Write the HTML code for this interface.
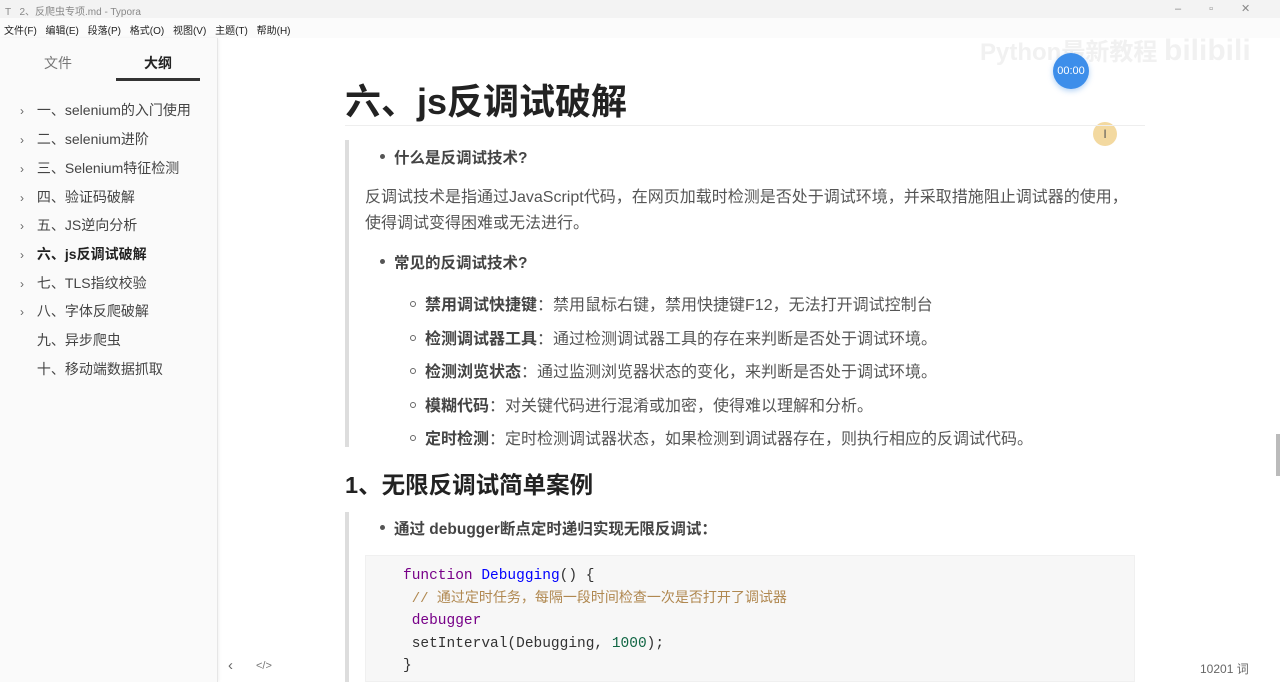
<!DOCTYPE html>
<html><head><meta charset="utf-8"><style>
*{margin:0;padding:0;box-sizing:border-box}
body{width:1280px;height:682px;overflow:hidden;background:#fff;font-family:"Liberation Sans","Noto Sans CJK SC",sans-serif;color:#333;position:relative}
.a{position:absolute;white-space:nowrap}
#tb{left:0;top:0;width:1280px;height:18px;background:#f3f3f3}
#mb{left:0;top:18px;width:1280px;height:20px;background:#fbfbfb}
#sb{left:0;top:38px;width:218px;height:644px;background:#fafafa;border-right:1px solid #e6e6e6;box-shadow:1px 0 3px rgba(0,0,0,.06)}
.ol{font-size:14px;color:#444;left:20px}
.ol b{display:inline-block;width:13px;color:#666;font-weight:normal;font-size:12px}
.t{font-size:16px;color:#555}
.bq{left:345px;width:4px;background:#ddd}
.li{font-size:15.5px;color:#444}
.dot{display:inline-block;width:5px;height:5px;border-radius:50%;background:#555;margin-right:9px;vertical-align:middle;position:relative;top:-2px}
.cir{display:inline-block;width:6px;height:6px;border-radius:50%;border:1px solid #666;margin-right:9px;vertical-align:middle;position:relative;top:-2px}
.code{font-family:"Liberation Mono","Noto Sans CJK SC",monospace;font-size:14.5px;color:#333}
</style></head><body>
<div class="a" id="tb"></div>
<div class="a" style="left:5px;top:3px;font-size:10px;color:#888">T&nbsp;&nbsp; 2、反爬虫专项.md - Typora</div>
<div class="a" style="left:1175px;top:2px;font-size:11px;color:#888;letter-spacing:28px">–▫✕</div>
<div class="a" id="mb"></div>
<div class="a" style="left:4px;top:22px;font-size:10px;color:#222;word-spacing:6px">文件(F) 编辑(E) 段落(P) 格式(O) 视图(V) 主题(T) 帮助(H)</div>
<div class="a" id="sb"></div>
<div class="a" style="left:44px;top:53px;font-size:14px;color:#777">文件</div>
<div class="a" style="left:144px;top:53px;font-size:14px;color:#222;font-weight:bold">大纲</div>
<div class="a" style="left:116px;top:78px;width:84px;height:3px;background:#333"></div>
<div class="a ol" style="top:100px"><b>›</b> 一、selenium的入门使用</div>
<div class="a ol" style="top:129px"><b>›</b> 二、selenium进阶</div>
<div class="a ol" style="top:158px"><b>›</b> 三、Selenium特征检测</div>
<div class="a ol" style="top:187px"><b>›</b> 四、验证码破解</div>
<div class="a ol" style="top:215px"><b>›</b> 五、JS逆向分析</div>
<div class="a ol" style="top:244px;font-weight:bold;color:#222"><b>›</b> 六、js反调试破解</div>
<div class="a ol" style="top:273px"><b>›</b> 七、TLS指纹校验</div>
<div class="a ol" style="top:301px"><b>›</b> 八、字体反爬破解</div>
<div class="a ol" style="top:330px"><b></b> 九、异步爬虫</div>
<div class="a ol" style="top:359px"><b></b> 十、移动端数据抓取</div>
<div class="a" style="left:228px;top:657px;font-size:15px;color:#666">‹</div>
<div class="a" style="left:256px;top:660px;font-size:11px;color:#777">&lt;/&gt;</div>

<div class="a" style="left:980px;top:32px;font-size:24px;font-weight:bold;color:#f1f1f1">Python最新教程 <span style="font-size:30px">bilibili</span></div>
<div class="a" style="left:1053px;top:53px;width:36px;height:36px;border-radius:50%;background:#3d8eea;box-shadow:0 2px 6px rgba(60,140,230,.4);color:#fff;font-size:11px;text-align:center;line-height:36px">00:00</div>
<div class="a" style="left:1093px;top:122px;width:24px;height:24px;border-radius:50%;background:#f3d9a0;color:#555;font-size:12px;text-align:center;line-height:24px">I</div>

<div class="a" style="left:345px;top:73px;font-size:36px;font-weight:bold;color:#222">六、js反调试破解</div>
<div class="a" style="left:345px;top:125px;width:800px;height:1px;background:#eee"></div>
<div class="a bq" style="top:140px;height:307px"></div>
<div class="a li" style="left:380px;top:146px;font-weight:bold"><span class="dot"></span>什么是反调试技术?</div>
<div class="a t" style="left:365px;top:185px;line-height:26px">反调试技术是指通过JavaScript代码，在网页加载时检测是否处于调试环境，并采取措施阻止调试器的使用，<br>使得调试变得困难或无法进行。</div>
<div class="a li" style="left:380px;top:251px;font-weight:bold"><span class="dot"></span>常见的反调试技术?</div>
<div class="a t" style="left:410px;top:291px"><span class="cir"></span><b style="color:#444">禁用调试快捷键</b>：禁用鼠标右键，禁用快捷键F12，无法打开调试控制台</div>
<div class="a t" style="left:410px;top:325px"><span class="cir"></span><b style="color:#444">检测调试器工具</b>：通过检测调试器工具的存在来判断是否处于调试环境。</div>
<div class="a t" style="left:410px;top:358px"><span class="cir"></span><b style="color:#444">检测浏览状态</b>：通过监测浏览器状态的变化，来判断是否处于调试环境。</div>
<div class="a t" style="left:410px;top:392px"><span class="cir"></span><b style="color:#444">模糊代码</b>：对关键代码进行混淆或加密，使得难以理解和分析。</div>
<div class="a t" style="left:410px;top:425px"><span class="cir"></span><b style="color:#444">定时检测</b>：定时检测调试器状态，如果检测到调试器存在，则执行相应的反调试代码。</div>
<div class="a" style="left:345px;top:466px;font-size:23.5px;font-weight:bold;color:#222">1、无限反调试简单案例</div>
<div class="a bq" style="top:512px;height:170px"></div>
<div class="a li" style="left:380px;top:517px;font-weight:bold"><span class="dot"></span>通过 debugger断点定时递归实现无限反调试：</div>
<div class="a" style="left:365px;top:555px;width:770px;height:127px;background:#f7f7f7;border:1px solid #f0f0f0"></div>
<div class="a code" style="left:403px;top:565px;line-height:22.5px"><span style="color:#770088">function</span> <span style="color:#0000ff">Debugging</span>() {<br>&nbsp;<span style="color:#b08850;font-size:14px">// 通过定时任务，每隔一段时间检查一次是否打开了调试器</span><br>&nbsp;<span style="color:#770088">debugger</span><br>&nbsp;setInterval(Debugging, <span style="color:#116644">1000</span>);<br>}</div>
<div class="a" style="left:1200px;top:660px;font-size:12px;color:#666">10201 词</div>
<div class="a" style="left:1276px;top:434px;width:4px;height:42px;background:#bbb"></div>
</body></html>
